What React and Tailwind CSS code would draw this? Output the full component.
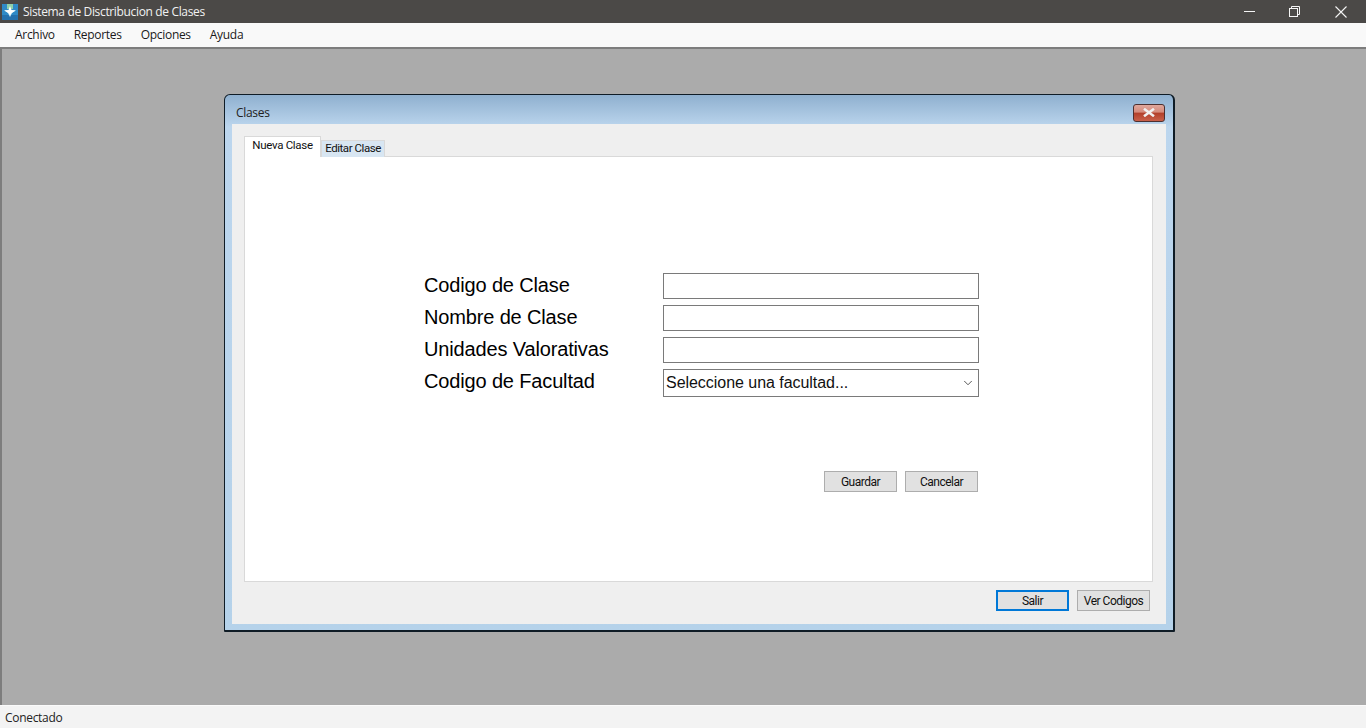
import { ChevronDown } from 'lucide-react';

const campos = ['Codigo de Clase', 'Nombre de Clase', 'Unidades Valorativas'];
const menu = ['Archivo', 'Reportes', 'Opciones', 'Ayuda'];

function Boton({ children, activo }) {
  return (
    <button
      className={
        activo
          ? 'w-[73px] h-[21px] bg-[#e1e1e1] border-2 border-[#0078d7] text-[12px] tracking-[-0.5px] text-[#111] flex items-center justify-center'
          : 'w-[73px] h-[21px] bg-[#e1e1e1] border border-[#adadad] text-[12px] tracking-[-0.5px] text-[#111] flex items-center justify-center'
      }
    >
      {children}
    </button>
  );
}

function Logo() {
  return (
    <svg width="16" height="16" viewBox="0 0 16 16" className="shrink-0">
      <rect width="16" height="16" fill="#2f8ac6" />
      <rect x="0" y="11" width="16" height="5" fill="#2571ad" />
      <rect x="5" y="0" width="6" height="5" fill="#8fd0a8" />
      <path d="M2 6 L14 6 L10 9 L8 13 L6 9 Z" fill="#d5f0f8" />
      <path d="M8 2 L9.5 6 L13 7 L9.5 9 L8 11 L6.5 9 L3 7 L6.5 6 Z" fill="#ffffff" />
    </svg>
  );
}

export default function App() {
  return (
    <div className="w-[1366px] h-[728px] flex flex-col overflow-hidden bg-[#ababab] font-['Open_Sans','Noto_Sans',sans-serif]">
      <div className="h-[23px] shrink-0 bg-[#4b4947] flex items-center text-[#f2f2f2]">
        <div className="pl-[2px] pr-[5px]"><Logo /></div>
        <span className="text-[12px] flex-1 tracking-[-0.35px]">Sistema de Disctribucion de Clases</span>
        <svg width="11" height="11" viewBox="0 0 11 11" stroke="#f5f5f5" className="mr-[34px]">
          <path d="M0 5.5 H11" />
        </svg>
        <svg width="11" height="11" viewBox="0 0 11 11" fill="none" stroke="#f5f5f5" className="mr-[35px]">
          <rect x="0.5" y="2.5" width="8" height="8" />
          <path d="M2.5 2.5 V0.5 H10.5 V8.5 H8.5" />
        </svg>
        <svg width="12" height="12" viewBox="0 0 12 12" stroke="#f5f5f5" strokeWidth="1.1" className="mr-[19px]">
          <path d="M0.5 0.5 L11.5 11.5 M11.5 0.5 L0.5 11.5" />
        </svg>
      </div>

      <div className="h-[24px] shrink-0 bg-[#f9f9f9] flex items-center pl-[15px] gap-[19px] text-[12px] tracking-[-0.3px] text-[#1a1a1a]">
        {menu.map((m) => <span key={m}>{m}</span>)}
      </div>

      <div className="flex-1 border-t-2 border-l-2 border-[#7d7d7d] pl-[222px] pt-[45px]">
        <div className="w-[951px] h-[538px] rounded-t-[6px] rounded-b-[1px] border border-[#0f1c26] border-b-2 border-r-2 bg-[linear-gradient(to_bottom,#8fb0cf_0%,#bcd6ee_6%,#b5d2ea_100%)] px-[7px] pb-[6px] flex flex-col">
          <div className="h-[29px] shrink-0 flex items-center justify-between">
            <span className="text-[12px] tracking-[-0.3px] text-[#222] pl-[4px] pt-[6px]">Clases</span>
            <div className="w-[32px] h-[18px] mt-[6px] mr-[1px] rounded-[3px] border border-[#4d3030] bg-[linear-gradient(to_bottom,#dfa79c_0%,#d58a7b_45%,#b23f2a_50%,#c9604a_100%)] flex items-center justify-center">
              <svg width="14" height="9" viewBox="0 0 14 9" stroke="#f0f0f0" strokeWidth="2.6">
                <path d="M2 0.8 L12 8.2 M12 0.8 L2 8.2" />
              </svg>
            </div>
          </div>

          <div className="flex-1 bg-[#efefef] pt-[12px] px-[12px] flex flex-col">
            <div className="flex items-end h-[21px] -mb-px relative z-10 font-['Roboto',sans-serif]">
              <div className="w-[77px] h-[21px] bg-white border border-b-0 border-[#d9d9d9] text-[11.5px] tracking-[-0.3px] text-[#111] flex items-center justify-center pb-[2px]">
                Nueva Clase
              </div>
              <div className="w-[64px] h-[17px] bg-[#d8e6f2] border border-b-0 border-[#d9d9d9] text-[11.5px] tracking-[-0.45px] text-[#111] flex items-center justify-center">
                Editar Clase
              </div>
            </div>

            <div className="w-[909px] h-[426px] bg-white border border-[#d9d9d9] pt-[116px] font-['Liberation_Sans',sans-serif] text-black">
              <div className="pl-[179px] flex flex-col gap-[6px]">
                {campos.map((c) => (
                  <div key={c} className="flex h-[26px]">
                    <label className="w-[239px] text-[20px] tracking-[-0.15px] leading-[24px]">{c}</label>
                    <input className="w-[316px] h-[26px] border border-[#7a7a7a] bg-white outline-none" />
                  </div>
                ))}
                <div className="flex h-[28px]">
                  <label className="w-[239px] text-[20px] tracking-[-0.15px] leading-[24px]">Codigo de Facultad</label>
                  <div className="w-[316px] h-[28px] border border-[#7a7a7a] flex items-center justify-between pl-[2px] pr-[3px] text-[16px] tracking-[-0.04px] text-[#111]">
                    <span>Seleccione una facultad...</span>
                    <ChevronDown size={14} strokeWidth={1.4} className="text-[#333]" />
                  </div>
                </div>
              </div>

              <div className="pl-[579px] pt-[74px] flex gap-[8px] font-['Roboto',sans-serif]">
                <Boton>Guardar</Boton>
                <Boton>Cancelar</Boton>
              </div>
            </div>

            <div className="flex justify-end gap-[8px] pr-[4px] pt-[8px] pb-[13px] font-['Roboto',sans-serif]">
              <Boton activo>Salir</Boton>
              <Boton>Ver Codigos</Boton>
            </div>
          </div>
        </div>
      </div>

      <div className="h-[23px] shrink-0 bg-[#f3f3f3] border-t border-[#fafafa] flex items-center pl-[5px] pt-[2px] text-[12px] tracking-[-0.3px] text-[#222]">
        Conectado
      </div>
    </div>
  );
}
